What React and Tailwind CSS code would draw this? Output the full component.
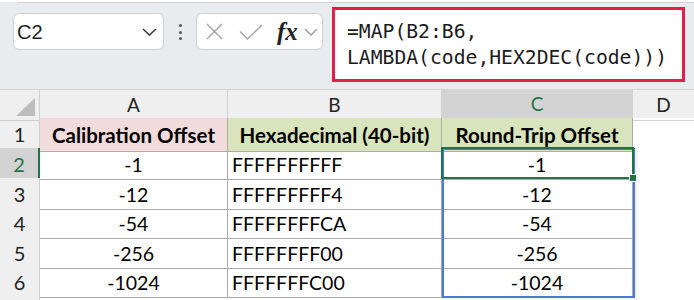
import React from "react";

const cellFont = { fontFamily: "Lato, 'Open Sans', sans-serif" };

const data = [
  ["-1", "FFFFFFFFFF", "-1"],
  ["-12", "FFFFFFFFF4", "-12"],
  ["-54", "FFFFFFFFCA", "-54"],
  ["-256", "FFFFFFFF00", "-256"],
  ["-1024", "FFFFFFFC00", "-1024"],
];

const rowHeights = ["h-[30px]", "h-[29px]", "h-[30px]", "h-[29px]", "h-[30px]"];

function FormulaBar() {
  return (
    <div className="relative h-[90px] bg-[#e9ecef] border-b border-[#d4d4d4]">
      <div className="h-[2px] bg-white" />
      <div className="ml-[17px] h-px bg-[#cfd2d6]" />
      <div className="flex items-start pl-[13px] pt-[4px]">
        {/* name box */}
        <div className="mt-[6px] flex h-[37px] w-[151px] items-center justify-between rounded-[6px] border border-[#cdd1d6] bg-white pl-[3px] pr-[6px]">
          <span className="text-[20px] text-[#1f1f1f]" style={{ fontFamily: "'Liberation Sans', Arial, sans-serif" }}>
            C2
          </span>
          <svg width="15" height="8" viewBox="0 0 15 8" fill="none">
            <path d="M1 1l6.5 6 6.5-6" stroke="#333" strokeWidth="1.5" />
          </svg>
        </div>
        {/* dots */}
        <div className="mt-[17px] flex w-[32px] flex-col items-center gap-[3.5px]">
          <span className="h-[3px] w-[3px] rounded-full bg-[#555]" />
          <span className="h-[3px] w-[3px] rounded-full bg-[#555]" />
          <span className="h-[3px] w-[3px] rounded-full bg-[#555]" />
        </div>
        {/* fx box */}
        <div className="mt-[6px] flex h-[37px] w-[127px] items-center rounded-[6px] border border-[#cdd1d6] bg-white pl-[9px]">
          <svg width="17" height="17" viewBox="0 0 17 17" fill="none">
            <path d="M1 1l15 15M16 1L1 16" stroke="#a3a3a3" strokeWidth="1.4" />
          </svg>
          <svg className="ml-[16px]" width="24" height="16" viewBox="0 0 24 16" fill="none">
            <path d="M1 7.5l7.5 7.5L23 1" stroke="#a3a3a3" strokeWidth="1.4" />
          </svg>
          <span
            className="ml-[14px] text-[25px] italic leading-none text-[#222]"
            style={{ fontFamily: "'Liberation Serif', 'Times New Roman', serif", fontWeight: 600 }}
          >
            fx
          </span>
          <svg className="ml-[6px]" width="14" height="8" viewBox="0 0 14 8" fill="none">
            <path d="M1 1l6 6 6-6" stroke="#9a9a9a" strokeWidth="1.3" />
          </svg>
        </div>
        {/* formula */}
        <div className="ml-[9px] h-[75px] w-[353px] border-[3px] border-[#e0204a] bg-white pl-[12px] pt-[9px]">
          <div
            className="text-[19.7px] leading-[26px] text-[#1a1a1a] whitespace-pre"
            style={{ fontFamily: "'DejaVu Sans Mono', 'Liberation Mono', monospace" }}
          >
            {"=MAP(B2:B6,\nLAMBDA(code,HEX2DEC(code)))"}
          </div>
        </div>
      </div>
    </div>
  );
}

function Sheet() {
  return (
    <div className="relative bg-white" style={cellFont}>
      {/* column headers */}
      <div className="grid h-[28px] grid-cols-[40px_188px_214px_191px_61px] bg-[#efefef] text-[19px] text-[#222]">
        <div className="relative border-r border-b border-[#cfcfcf]">
          <svg className="absolute bottom-[4px] right-[4px]" width="19" height="18" viewBox="0 0 19 18">
            <path d="M19 0V18H0Z" fill="#bdbdbd" />
          </svg>
        </div>
        <div className="flex items-center justify-center border-r border-b border-[#d2d2d2]">A</div>
        <div className="flex items-center justify-center border-r border-b border-[#d2d2d2]">B</div>
        <div className="flex items-center justify-center border-r border-[#d2d2d2] border-b-2 border-b-[#217346] bg-[#d3d3d3] text-[#217346]">
          C
        </div>
        <div className="flex items-center justify-center border-b border-[#d2d2d2]">D</div>
      </div>

      {/* row 1 */}
      <div className="grid h-[30px] grid-cols-[40px_188px_214px_191px_61px] text-[20.5px]">
        <div className="flex items-center justify-center border-r border-b border-[#cfcfcf] bg-[#efefef] text-[20px] text-[#222]">1</div>
        <div className="flex items-center justify-center border-r border-b border-[#ababab] bg-[#f2dcdb] pt-[2px] font-bold text-black">
          Calibration Offset
        </div>
        <div className="flex items-center justify-center border-r border-b border-[#ababab] bg-[#d8e4bc] pt-[2px] font-bold text-black">
          Hexadecimal (40-bit)
        </div>
        <div className="flex items-center justify-center border-r border-b border-[#ababab] bg-[#d8e4bc] pt-[2px] font-bold text-black">
          Round-Trip Offset
        </div>
        <div />
      </div>

      {data.map((r, i) => {
        const sel = i === 0;
        return (
          <div key={i} className={`grid ${rowHeights[i]} grid-cols-[40px_188px_214px_191px_61px] text-[19.5px] text-black`}>
            <div
              className={
                sel
                  ? "flex items-center justify-center border-b border-[#cfcfcf] border-r-2 border-r-[#217346] bg-[#d3d3d3] text-[20px] text-[#217346]"
                  : "flex items-center justify-center border-r border-b border-[#cfcfcf] bg-[#efefef] text-[20px] text-[#222]"
              }
            >
              {i + 2}
            </div>
            <div className="flex items-center justify-center border-r border-b border-[#ababab] pt-[2px]">{r[0]}</div>
            <div className="flex items-center border-r border-b border-[#ababab] pl-[4px] pt-[2px]">{r[1]}</div>
            <div className="flex items-center justify-center border-r border-b border-[#ababab] pt-[2px]">{r[2]}</div>
            <div />
          </div>
        );
      })}

      {/* row 7 (partial) */}
      <div className="grid h-[10px] grid-cols-[40px_188px_214px_191px_61px]">
        <div className="border-r border-[#cfcfcf] bg-[#efefef]" />
      </div>

      {/* spill range outline */}
      <div className="pointer-events-none absolute left-[442px] top-[58px] h-[150px] w-[193px] border-2 border-[#4a7bd0] shadow-[2px_1px_4px_rgba(0,0,0,0.08)]" />
      {/* active cell */}
      <div className="pointer-events-none absolute left-[441px] top-[57px] h-[32px] w-[193px] border-2 border-[#217346]" />
      <div className="pointer-events-none absolute left-[629px] top-[84px] h-[8px] w-[8px] border border-white bg-[#217346]" />
    </div>
  );
}

export default function App() {
  return (
    <div className="h-[300px] w-[694px] overflow-hidden bg-white">
      <FormulaBar />
      <Sheet />
    </div>
  );
}
